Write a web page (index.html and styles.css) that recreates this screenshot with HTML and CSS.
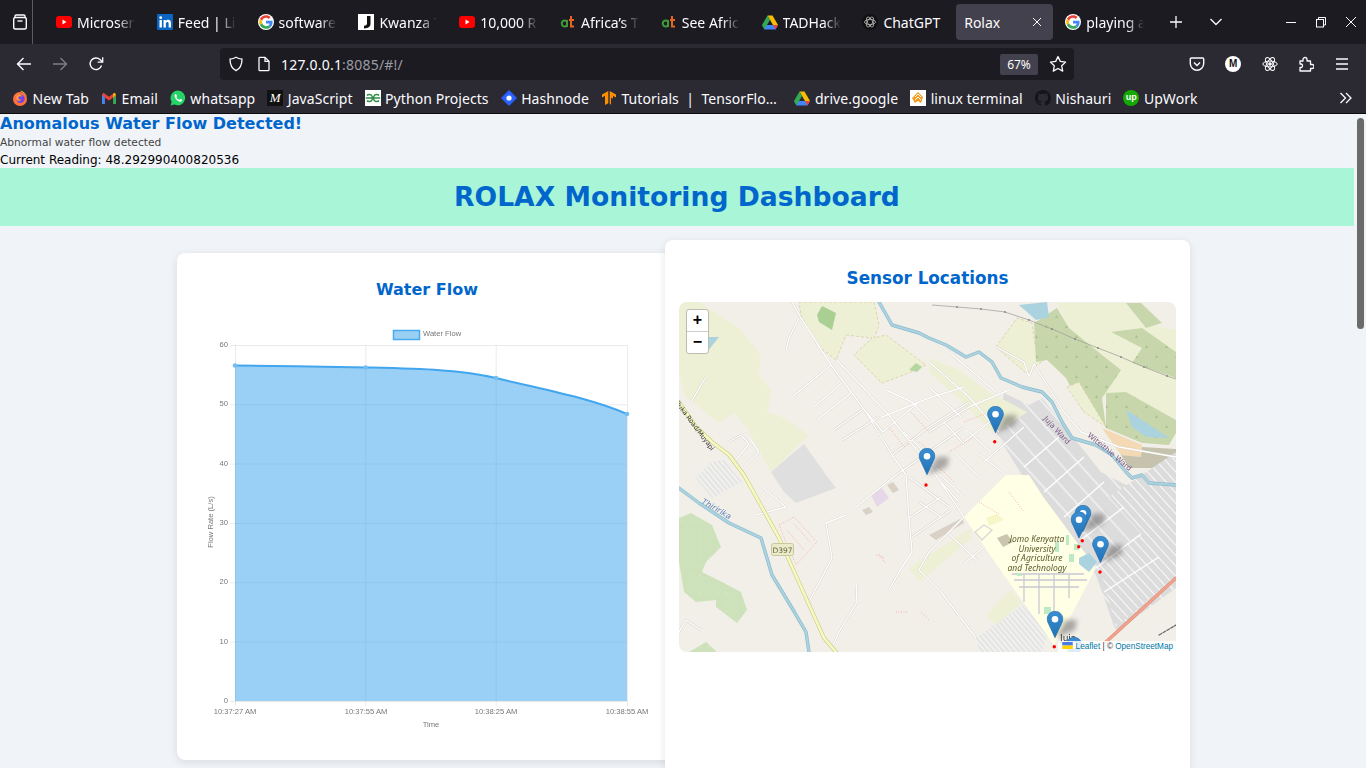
FILE: index.html
```html
<!DOCTYPE html>
<html lang="en">
<head>
    <meta charset="UTF-8">
    <title>Rolax</title>
    <link rel="stylesheet" href="styles.css">
</head>
<body>
<svg class="defs" width="0" height="0">
    <symbol id="yt" viewBox="0 0 16 16"><rect y="2" width="16" height="12" rx="3" fill="#f00"/><path d="M6.5 5.5v5l4-2.5z" fill="#fff"/></symbol>
    <symbol id="goog" viewBox="-4 -4 56 56">
        <circle cx="24" cy="24" r="28" fill="#fff"/>
        <path fill="#EA4335" d="M24 9.5c3.54 0 6.71 1.22 9.21 3.6l6.85-6.85C35.9 2.38 30.47 0 24 0 14.62 0 6.51 5.38 2.56 13.22l7.98 6.19C12.43 13.72 17.74 9.5 24 9.5z"/>
        <path fill="#4285F4" d="M46.98 24.55c0-1.57-.15-3.09-.38-4.55H24v9.02h12.94c-.58 2.96-2.26 5.48-4.78 7.18l7.73 6c4.51-4.18 7.09-10.36 7.09-17.65z"/>
        <path fill="#FBBC05" d="M10.53 28.59c-.48-1.45-.76-2.99-.76-4.59s.27-3.14.76-4.59l-7.98-6.19C.92 16.46 0 20.12 0 24c0 3.88.92 7.54 2.56 10.78l7.97-6.19z"/>
        <path fill="#34A853" d="M24 48c6.48 0 11.93-2.13 15.89-5.81l-7.73-6c-2.15 1.45-4.92 2.3-8.16 2.3-6.26 0-11.57-4.22-13.47-9.91l-7.98 6.19C6.51 42.62 14.62 48 24 48z"/>
    </symbol>
    <symbol id="at" viewBox="0 0 16 16">
        <path d="M7 7.5a3 3 0 1 0 0 4M7 6v7" fill="none" stroke="#3f9a3a" stroke-width="2"/>
        <path d="M11 2v10.500h3M9 6h5" fill="none" stroke="#e8641c" stroke-width="2"/>
    </symbol>
    <symbol id="drive" viewBox="0 0 16 15">
        <path d="M5.5 1h5L16 10.500h-5z" fill="#fbbc04"/>
        <path d="M0 10.500h16L13.500 15h-11z" fill="#4285f4"/>
        <path d="M5.5 1 8 5.500 5 10.500 2.500 15 0 10.500z" fill="#34a853"/>
        <path d="M11 10.500h5L13.500 15z" fill="#ea4335"/>
    </symbol>
    <symbol id="pin" viewBox="0 0 25 41">
        <path d="M12.5.5C5.900.5.500 5.800.500 12.300c0 2.200.7 4.400 1.800 6.200L12.500 40.500l10.200-22c1.100-1.800 1.800-4 1.800-6.200C24.500 5.800 19.100.5 12.500.5z" fill="url(#pinfill)" stroke="#2a6fa8" stroke-width="1"/>
        <circle cx="12.5" cy="12.5" r="5" fill="#fff"/>
    </symbol>
    <linearGradient id="pinfill" x1="0" y1="0" x2="0" y2="1">
        <stop offset="0" stop-color="#3a8fd2"/>
        <stop offset="1" stop-color="#2270b5"/>
    </linearGradient>
    <pattern id="blockstripes" width="14" height="14" patternUnits="userSpaceOnUse" patternTransform="rotate(48)">
        <rect width="14" height="14" fill="#dcdcdc"/>
        <path d="M0 7h14" stroke="#fff" stroke-width="1"/>
    </pattern>
    <pattern id="finestripes" width="7" height="7" patternUnits="userSpaceOnUse" patternTransform="rotate(-42)">
        <rect width="7" height="7" fill="#dcdcdc"/>
        <path d="M3.500 0v7" stroke="#fafafa" stroke-width="1"/>
    </pattern>
    <pattern id="housing" width="4" height="4" patternUnits="userSpaceOnUse" patternTransform="rotate(-40)">
        <rect width="4" height="4" fill="#e4e4e2"/>
        <path d="M2 0v4" stroke="#fff" stroke-width="1"/>
    </pattern>
    <pattern id="trees" width="9" height="9" patternUnits="userSpaceOnUse">
        <rect width="9" height="9" fill="#cde2bb"/>
        <circle cx="3" cy="3" r=".6" fill="#e6f0da"/>
    </pattern>
    <pattern id="forest" width="20" height="20" patternUnits="userSpaceOnUse">
        <rect width="20" height="20" fill="#c8d7ab"/>
        <path d="M6 6 7.500 3 9 6zM16 16l1.500-3 1.500 3z" fill="#aabf8f"/>
    </pattern>
    <filter id="soft" x="-50%" y="-50%" width="200%" height="200%"><feGaussianBlur stdDeviation="2.4"/></filter>
</svg>

<div class="browser">
    <div class="tabbar">
        <div class="tabs-btn">
            <svg width="18" height="18" viewBox="0 0 18 18" fill="none" stroke="#fbfbfe" stroke-width="1.4"><path d="M4 4.500V3.200c0-.7.5-1.200 1.200-1.200h7.600c.7 0 1.200.5 1.200 1.200v1.300"/><rect x="2.700" y="4.500" width="12.600" height="11.500" rx="1.800"/><path d="M6.500 8h5"/></svg>
        </div>
        <div class="tabs">
            <div class="tab"><svg class="fav"><use href="#yt"/></svg><span class="tab-title">Microservices</span></div>
            <div class="tab"><svg class="fav" viewBox="0 0 16 16"><rect width="16" height="16" rx="1" fill="#0a66c2"/><rect x="2.500" y="6" width="2.400" height="7.500" fill="#fff"/><circle cx="3.700" cy="3.700" r="1.400" fill="#fff"/><path d="M6.500 6h2.300v1.100c.5-.8 1.300-1.300 2.400-1.300 2 0 2.800 1.300 2.800 3.400v4.300h-2.400V9.700c0-1-.3-1.700-1.200-1.700s-1.500.7-1.500 1.800v3.700H6.500z" fill="#fff"/></svg><span class="tab-title">Feed | LinkedIn</span></div>
            <div class="tab"><svg class="fav"><use href="#goog"/></svg><span class="tab-title">software engineer</span></div>
            <div class="tab"><svg class="fav" viewBox="0 0 16 16"><rect width="16" height="16" fill="#fff"/><path d="M9 2h3.500v7.500c0 3-1.500 4.500-6.500 5v-2.700c2.300-.3 3-1 3-2.500z" fill="#111"/></svg><span class="tab-title">Kwanza Tukule</span></div>
            <div class="tab"><svg class="fav"><use href="#yt"/></svg><span class="tab-title">10,000 Reasons</span></div>
            <div class="tab"><svg class="fav"><use href="#at"/></svg><span class="tab-title">Africa’s Talking</span></div>
            <div class="tab"><svg class="fav"><use href="#at"/></svg><span class="tab-title">See Africa’s</span></div>
            <div class="tab"><svg class="fav"><use href="#drive"/></svg><span class="tab-title">TADHack 2024</span></div>
            <div class="tab"><svg class="fav" viewBox="0 0 16 16"><circle cx="8" cy="8" r="8" fill="#111"/><g fill="none" stroke="#bbb" stroke-width=".8"><ellipse cx="8" cy="8" rx="5.500" ry="2.600"/><ellipse cx="8" cy="8" rx="5.500" ry="2.600" transform="rotate(60 8 8)"/><ellipse cx="8" cy="8" rx="5.500" ry="2.600" transform="rotate(120 8 8)"/></g></svg><span class="tab-title tab-title-full">ChatGPT</span></div>
            <div class="tab tab-active"><span class="tab-title tab-title-full">Rolax</span><svg class="tab-close" width="10" height="10" viewBox="0 0 10 10" stroke="#fbfbfe" stroke-width="1"><path d="M1 1l8 8M9 1l-8 8"/></svg></div>
            <div class="tab"><svg class="fav"><use href="#goog"/></svg><span class="tab-title">playing a guitar</span></div>
        </div>
        <svg class="tab-plus" width="14" height="14" viewBox="0 0 14 14" stroke="#fbfbfe" stroke-width="1.300"><path d="M7 1v12M1 7h12"/></svg>
        <svg class="tab-list" width="14" height="10" viewBox="0 0 14 10" fill="none" stroke="#fbfbfe" stroke-width="1.300"><path d="M1.500 2l5.500 5.500L12.500 2"/></svg>
        <div class="win-controls">
            <svg width="12" height="12" viewBox="0 0 12 12" stroke="#fbfbfe" stroke-width="1"><path d="M1 6.500h10"/></svg>
            <svg width="12" height="12" viewBox="0 0 12 12" fill="none" stroke="#fbfbfe" stroke-width="1"><rect x="1.500" y="3.500" width="7" height="7.500"/><path d="M3.500 3.500v-2h7v7.500h-2"/></svg>
            <svg width="12" height="12" viewBox="0 0 12 12" stroke="#fbfbfe" stroke-width="1"><path d="M1 1l10 10M11 1L1 11"/></svg>
        </div>
    </div>

    <div class="toolbar">
        <svg class="nav-icon" width="16" height="16" viewBox="0 0 16 16" fill="none" stroke="#fbfbfe" stroke-width="1.400"><path d="M15 8H1.500M7.500 2L1.500 8l6 6"/></svg>
        <svg class="nav-icon nav-icon-off" width="16" height="16" viewBox="0 0 16 16" fill="none" stroke="#fbfbfe" stroke-width="1.400"><path d="M1 8h13.500M8.500 2l6 6-6 6"/></svg>
        <svg class="nav-icon" width="16" height="16" viewBox="0 0 16 16" fill="none" stroke="#fbfbfe" stroke-width="1.400"><path d="M13.500 9.500A5.800 5.800 0 1 1 12 3.600L14.500 6"/><path d="M14.700 1.200V6.200H9.700" stroke-width="1.300"/></svg>
        <div class="urlbar">
            <svg class="url-shield" width="16" height="16" viewBox="0 0 16 16" fill="none" stroke="#fbfbfe" stroke-width="1.300"><path d="M8 1.300c2 1.200 3.800 1.700 6 1.800 0 5-1.500 9.500-6 11.600C3.500 12.600 2 8.100 2 3.100c2.200-.1 4-.6 6-1.800z"/></svg>
            <svg class="url-page" width="14" height="16" viewBox="0 0 14 16" fill="none" stroke="#fbfbfe" stroke-width="1.300"><path d="M2 2.300c0-.6.400-1 1-1h5l4 4v8.400c0 .6-.4 1-1 1H3c-.6 0-1-.4-1-1zM8 1.300v4h4"/></svg>
            <span class="url-text">127.0.0.1<span class="url-dim">:8085/#!/</span></span>
            <span class="url-zoom">67%</span>
            <svg class="url-star" width="18" height="18" viewBox="0 0 18 18" fill="none" stroke="#fbfbfe" stroke-width="1.300" stroke-linejoin="round"><path d="M9 1.500l2.300 4.900 5.300.7-3.900 3.700 1 5.300L9 13.500l-4.700 2.600 1-5.300L1.400 7.100l5.300-.7z"/></svg>
        </div>
        <div class="tool-icons">
            <svg width="16" height="16" viewBox="0 0 16 16" fill="none" stroke="#fbfbfe" stroke-width="1.400"><path d="M2.300 2h11.400c.6 0 1 .4 1 1v4.500a6.700 6.700 0 0 1-13.400 0V3c0-.6.400-1 1-1z"/><path d="M5 6.500l3 3 3-3"/></svg>
            <span class="avatar">M</span>
            <svg width="16" height="16" viewBox="0 0 16 16" fill="none" stroke="#fbfbfe" stroke-width="1"><ellipse cx="8" cy="8" rx="7.200" ry="2.900"/><ellipse cx="8" cy="8" rx="7.200" ry="2.900" transform="rotate(60 8 8)"/><ellipse cx="8" cy="8" rx="7.200" ry="2.900" transform="rotate(120 8 8)"/><circle cx="8" cy="8" r="1.300" fill="#fbfbfe"/></svg>
            <svg width="16" height="16" viewBox="0 0 16 16" fill="none" stroke="#fbfbfe" stroke-width="1.300" stroke-linejoin="round"><path d="M2 5.500h3V4a2 2 0 0 1 4 0v1.500h3.500V9H14a2 2 0 0 1 0 4h-1.500v2.500H2V12h1.200a1.800 1.800 0 0 0 0-3.500H2z" transform="translate(0 -.5)"/></svg>
            <svg width="16" height="16" viewBox="0 0 16 16" stroke="#fbfbfe" stroke-width="1.400"><path d="M2 3h12M2 8h12M2 13h12"/></svg>
        </div>
    </div>

    <div class="bookmarks">
        <div class="bm"><svg class="fav" viewBox="0 0 16 16"><circle cx="8" cy="9" r="7" fill="#ff7139"/><path d="M8 .5c2 2 6 3 7 7 0-2-2-6-7-7z" fill="#ffbd4f"/><circle cx="8.500" cy="8.800" r="4.200" fill="#7542e5"/><path d="M5 5c2-1.500 5-.5 5 2-1-1-3-1-3.500.5C6 9 8 10 9.500 9.500 8 12 4 11 4 8c0-1 .4-2.300 1-3z" fill="#ff9640"/></svg><span>New Tab</span></div>
        <div class="bm"><svg class="fav" viewBox="0 0 16 16"><path d="M1 4.500V14h2.800V7.500L8 10.500l4.200-3V14H15V4.500l-1.500-1.800L8 6.800 2.500 2.700z" fill="#ea4335"/><path d="M1 4.500V14h2.800V7.500z" fill="#4285f4"/><path d="M15 4.500V14h-2.800V7.500z" fill="#34a853"/><path d="M12.200 7.500L15 4.500l-1.500-1.800-1.300 1z" fill="#fbbc04"/></svg><span>Email</span></div>
        <div class="bm"><svg class="fav" viewBox="0 0 16 16"><path d="M8 .5a7.400 7.400 0 0 0-6.300 11.300L.6 15.500l3.800-1A7.400 7.400 0 1 0 8 .5z" fill="#25d366"/><path d="M5.500 4c-.8.500-1.200 1.500-.8 2.800.6 2 2.400 4 4.500 4.800 1.400.5 2.600-.1 3-1 .2-.5-.1-.8-1.800-1.500-.4-.1-.6.400-1 .8-1.100-.3-2.400-1.500-3-2.700.3-.4.800-.8.600-1.200C6.300 4.200 6 3.700 5.500 4z" fill="#fff"/></svg><span>whatsapp</span></div>
        <div class="bm"><span class="fav-mdn">M</span><span>JavaScript</span></div>
        <div class="bm"><svg class="fav" viewBox="0 0 16 16"><rect width="16" height="16" fill="#fff"/><path d="M.8 8h14.400M2 5.500C3 4 6 4 7 6c.8 1.500.8 2.500 0 4-1 2-4 2-5 .5M14 5.500C13 4 10 4 9 6c-.8 1.500-.8 2.500 0 4 1 2 4 2 5 .5" fill="none" stroke="#2f8d46" stroke-width="1.500"/></svg><span>Python Projects</span></div>
        <div class="bm"><svg class="fav" viewBox="0 0 16 16"><path d="M8 .5 15.500 8 8 15.500.5 8z" fill="#2962ff" stroke="#2962ff" stroke-width="1" stroke-linejoin="round"/><circle cx="8" cy="8" r="2.600" fill="#fff"/></svg><span>Hashnode</span></div>
        <div class="bm"><svg class="fav" viewBox="0 0 16 16"><path d="M7.300 1 1 4.500v3l3-1.700V15l3.300-1.800zM8.700 1 15 4.500v3l-3-1.700v3l-2-1.200V15l-1.300-1.800z" fill="#ff8f00"/></svg><span class="bm-long">Tutorials&nbsp; |&nbsp; TensorFlo…</span></div>
        <div class="bm"><svg class="fav"><use href="#drive"/></svg><span>drive.google</span></div>
        <div class="bm"><svg class="fav" viewBox="0 0 16 16"><rect width="16" height="16" fill="#fff"/><path d="M8 2l5 5-2 6-3-2-3 2-3-5z" fill="#f39c1f"/><path d="M5 7l3-3 3 3M5 10l3-3 3 3" fill="none" stroke="#fff" stroke-width="1"/></svg><span>linux terminal</span></div>
        <div class="bm"><svg class="fav" viewBox="0 0 16 16"><path fill="#15141a" d="M8 0C3.580 0 0 3.580 0 8c0 3.540 2.290 6.530 5.470 7.590.4.070.55-.17.55-.38 0-.19-.01-.82-.01-1.490-2.010.37-2.530-.49-2.690-.94-.09-.23-.48-.94-.82-1.130-.28-.15-.68-.52-.01-.53.630-.01 1.080.58 1.230.82.720 1.210 1.870.87 2.330.66.070-.52.280-.87.510-1.070-1.780-.2-3.640-.89-3.640-3.950 0-.87.310-1.590.820-2.150-.08-.2-.36-1.020.08-2.120 0 0 .67-.21 2.200.82.640-.18 1.320-.27 2-.27s1.360.09 2 .27c1.530-1.040 2.200-.82 2.200-.82.440 1.100.160 1.920.080 2.120.51.560.82 1.270.82 2.150 0 3.070-1.870 3.750-3.650 3.950.290.250.540.730.540 1.480 0 1.070-.01 1.930-.01 2.200 0 .21.150.46.550.38A8.010 8.010 0 0 0 16 8c0-4.420-3.580-8-8-8z"/></svg><span>Nishauri</span></div>
        <div class="bm"><span class="fav-up">up</span><span>UpWork</span></div>
        <svg class="bm-more" width="14" height="12" viewBox="0 0 14 12" fill="none" stroke="#fbfbfe" stroke-width="1.300"><path d="M1.500 1l5 5-5 5M7 1l5 5-5 5"/></svg>
    </div>

    <div class="viewport">
        <div class="page">
            <div class="alert">
                <h3>Anomalous Water Flow Detected!</h3>
                <p class="alert-msg">Abnormal water flow detected</p>
                <p class="alert-reading">Current Reading: 48.292990400820536</p>
            </div>
            <header class="header">
                <h1>ROLAX Monitoring Dashboard</h1>
            </header>
            <div class="dashboard">
                <section class="card card-chart">
                    <h2>Water Flow</h2>
                    <svg class="chart" width="488" height="430" viewBox="177 310 488 430">
                        <rect x="393.5" y="330.5" width="26" height="9" fill="#9bd0f5" stroke="#4aaaee" stroke-width="1.5"/>
                        <text class="lbl" x="423" y="336">Water Flow</text>
                        <g class="grid">
                            <path d="M230 345.500h397M230 404.800h397M230 464.100h397M230 523.500h397M230 582.800h397M230 642.100h397M230 701.500h397"/>
                            <path d="M235.500 345v361M365.800 345v361M496.200 345v361M627.500 345v361"/>
                        </g>
                        <path d="M235 365.500C280 365.800 320 366.500 365.700 367.500 420 368.800 460 369.500 496 378 545 390 590 398 627 414V701H235z" fill="rgba(54,162,235,.5)"/>
                        <path d="M235 365.500C280 365.800 320 366.500 365.700 367.500 420 368.800 460 369.500 496 378 545 390 590 398 627 414" fill="none" stroke="#42a6ee" stroke-width="2"/>
                        <g fill="#74bdf2"><circle cx="235" cy="365.5" r="2.300"/><circle cx="365.7" cy="367.5" r="2.300"/><circle cx="496" cy="378" r="2.300"/><circle cx="627" cy="414" r="2.300"/></g>
                        <g class="lbl lbl-end">
                            <text x="228" y="347">60</text><text x="228" y="406">50</text><text x="228" y="466">40</text><text x="228" y="525">30</text><text x="228" y="584">20</text><text x="228" y="644">10</text><text x="228" y="703">0</text>
                        </g>
                        <g class="lbl lbl-mid">
                            <text x="235" y="714">10:37:27 AM</text><text x="366" y="714">10:37:55 AM</text><text x="496" y="714">10:38:25 AM</text><text x="627" y="714">10:38:55 AM</text>
                            <text x="431" y="727">Time</text>
                            <text transform="translate(213 522) rotate(-90)">Flow Rate (L/s)</text>
                        </g>
                    </svg>
                </section>
                <section class="card card-map">
                    <h2>Sensor Locations</h2>
                    <div class="map">
                        <svg class="map-base" width="497" height="350" viewBox="0 0 497 350">
                            <defs>
                                <g id="streets">
                                    <path d="M113 0 122 16 152 63 187 110 213 153 227 173 230 216 233 250 220 270 210 288"/>
                                    <path d="M152 63 112 96M163 81 135 105M172 91 138 118M183 108 155 128M200 115 163 138M120 16 110 36 107 48M27 75 12 100"/>
                                    <path d="M158 58 207 110 250 163 285 215M207 88 233 100 250 118M203 115 250 96 285 85M187 110 204 130 240 100M213 153 250 125 290 100"/>
                                    <path d="M83 185 107 205 77 213M147 221 167 213M147 221 153 256 130 300M177 280 178 300 160 330 153 346M177 205 217 173 250 150 285 125M0 330 7 318 22 328"/>
                                    <path d="M50 140 62 133 70 142 55 160M70 135 80 150 65 165"/>
                                    <path d="M250 60 290 95 320 130M270 50 317 90M250 85 282 115M317 45 345 60 350 75 355 62 385 110 402 130 440 145 497 155"/>
                                    <path d="M250 130 290 105 330 88M285 140 317 115M305 160 345 125"/>
                                    <path d="M285 215 250 250 240 268 262 290 297 336M327 173 297 150M260 172 285 195M270 232 300 260M285 262 305 245"/>
                                    <path d="M250 190 270 205M262 180 280 200M240 200 262 215M230 175 250 190M230 216 262 195M233 235 272 208M240 150 262 170M275 150 300 175M290 130 312 150M225 130 245 150M265 120 285 142"/>
                                </g>
                            </defs>
                            <rect width="497" height="350" fill="#f2efe9"/>
                            <!-- land use -->
                            <path d="M0 0H20L60 26 82 53 80 73 93 90 88 110 103 115 130 133 92 170 68 126 55 110 40 121 17 103 7 96 0 73z" fill="#eef0d5"/>
                            <path d="M92 170 125 142 147 173 157 186 117 201 105 190z" fill="#dfdfdf"/>
                            <path d="M120 0H195L200 23 195 36 207 33 247 63 230 71 203 81 175 53 193 36 167 33 163 43 157 58 138 43 122 13z" fill="#eef0d5" stroke="#d9c693" stroke-width=".7" stroke-dasharray="3 2"/>
                            <path d="M138 13 143 4 157 11 153 28 140 20z" fill="#a9cf93"/>
                            <path d="M230 68 237 61 243 65 238 70z" fill="#b5d6a0"/>
                            <path d="M6 18 10 34 28 50 40 35 10 35z" fill="#aad3df"/>
                            <path d="M317 45 338 16 353 21 357 50 368 56 347 71z" fill="#eef0d5" stroke="#d9c693" stroke-width=".7" stroke-dasharray="3 2"/>
                            <path d="M378 1H447L462 21 497 28V116L463 103 437 90 423 95 417 76 385 16z" fill="#eef0d5"/>
                            <path d="M355 21 378 6 390 26 423 53 442 68 430 86 423 96 427 125 403 108 387 76 368 58 357 60z" fill="url(#forest)"/>
                            <path d="M432 30 463 26 497 50V76L453 61 463 46z" fill="url(#forest)"/>
                            <path d="M427 91 447 90 497 118V131L490 143 463 141 427 126z" fill="url(#forest)"/>
                            <path d="M447 1H462L483 21 467 26z" fill="#c8d7ab"/>
                            <path d="M388 85 400 80 427 125 405 110z" fill="#eef0d5" stroke="#d9c693" stroke-width=".6" stroke-dasharray="3 2"/>
                            <path d="M340 3 368 0 370 15 357 18z" fill="#aad3df"/>
                            <path d="M447 108 463 118 490 136 467 135 453 125z" fill="#aad3df"/>
                            <path d="M423 126 463 143 462 155 442 153z" fill="#f3d9b4"/>
                            <path d="M442 153 462 155 463 145 497 147V173L477 166 450 166z" fill="#c5c3ae"/>
                            <path d="M325 91 350 103 363 96 422 170 447 183 497 228V286L437 330 417 273 360 200 343 173 317 131z" fill="url(#blockstripes)"/>
                            <path d="M430 195 497 150V228L470 240z" fill="url(#finestripes)"/>
                            <path d="M420 262 497 205V275L437 325z" fill="url(#finestripes)"/>
                            <path d="M250 56 280 68 310 90 348 110 330 123 313 130 283 100 250 70z" fill="#eef0d5"/>
                            <path d="M0 216 12 211 33 223 42 245 27 260 23 270 43 280 62 290 68 308 58 321 37 305 37 298 17 300 5 290 0 260zM10 350 27 340 38 350z" fill="url(#trees)"/>
                            <path d="M17 176 33 196 63 180 57 173 45 158 32 160z" fill="url(#housing)"/>
                            <path d="M192 193 203 186 210 196 198 205z" fill="#e6d8e8"/>
                            <path d="M208 183 214 180 220 188 214 191zM183 208 190 205 194 210 187 213zM250 233 283 216 285 221 257 238z" fill="#d9d0c6"/>
                            <path d="M230 266 292 226 293 236 240 280z" fill="#eef0d5"/>
                            <path d="M297 336 343 303 370 330 363 350H300z" fill="url(#housing)"/>
                            <!-- campus -->
                            <path d="M285 215 327 173H350L365 196 417 266 387 323 375 343 320 266z" fill="#ffffe5"/>
                            <path d="M307 313 332 288 343 301 317 323z" fill="#eef0d5"/>
                            <path d="M333 272H405M335 278H408M340 285H400M345 272V300M360 272V312M375 272V310M390 272V296" fill="none" stroke="#c9c9d3" stroke-width="1.300"/>
                            <path d="M400 256 410 251 418 260 410 270 400 262z" fill="#aad3df"/>
                            <path d="M376 240H380V250H376zM387 233H390V243H387zM395 242H400V248H395zM390 252H395V260H390zM338 271H343V274H338zM365 305H372V312H365z" fill="#bde9c6"/>
                            <path d="M318 236 328 232 334 240 324 245z" fill="#c9c5ae"/>
                            <path d="M296 230 305 223 313 228 303 238z" fill="none" stroke="#d8d8d8" stroke-width="1.300"/>
                            <path d="M310 224 325 218 318 212 307 216z" fill="#f6f6c8"/>
                            <!-- water -->
                            <g fill="none" stroke-linecap="round" stroke-linejoin="round">
                                <path d="M200 0 213 23 240 31 250 36 267 43 287 55 300 50 313 60 322 76 343 85 363 90 373 100 383 120 393 136 417 143 433 153 447 170 453 176 463 173 470 181 497 183" stroke="#8db9cb" stroke-width="3.400"/>
                                <path d="M200 0 213 23 240 31 250 36 267 43 287 55 300 50 313 60 322 76 343 85 363 90 373 100 383 120 393 136 417 143 433 153 447 170 453 176 463 173 470 181 497 183" stroke="#aad3df" stroke-width="2.200"/>
                                <path d="M0 186 20 201 50 221 82 236 93 273 113 306 127 330 130 350" stroke="#8db9cb" stroke-width="3.400"/>
                                <path d="M0 186 20 201 50 221 82 236 93 273 113 306 127 330 130 350" stroke="#aad3df" stroke-width="2.200"/>
                            </g>
                            <!-- power line -->
                            <path d="M253 3 278 5 302 7 326 10 350 18 373 27 396 37 419 46 442 55 465 65 488 74 497 77" fill="none" stroke="#999" stroke-width=".7"/>
                            <g fill="#8a8a8a"><circle cx="278" cy="5" r="1"/><circle cx="302" cy="7" r="1"/><circle cx="326" cy="10" r="1"/><circle cx="350" cy="18" r="1"/><circle cx="373" cy="27" r="1"/><circle cx="396" cy="37" r="1"/><circle cx="419" cy="46" r="1"/><circle cx="442" cy="55" r="1"/><circle cx="465" cy="65" r="1"/><circle cx="488" cy="74" r="1"/></g>
                            <!-- white roads, casing then fill -->
                            <use href="#streets" class="roads-case"/>
                            <use href="#streets" class="roads"/>
                            <path class="roads" d="M345 165 380 135M365 190 405 155M385 215 425 180M402 238 445 205M417 266 462 232M425 290 480 255"/>
                            <g fill="none" stroke="#f3a696" stroke-width=".8" stroke-dasharray="1 1.500">
                                <path d="M100 223 115 215 138 240 117 263 100 223M108 228 125 248M115 222 131 240"/>
                                <path d="M200 252 207 262M197 253 206 256M217 310H228M242 310 250 318"/>
                                <path d="M210 125 225 145 235 135M232 110 250 130M240 140 252 150"/>
                                <path d="M285 120 305 112M270 150 295 135M260 165 275 180M300 200 320 212M330 190 345 210"/>
                            </g>
                            <!-- main roads -->
                            <g fill="none" stroke-linecap="round" stroke-linejoin="round">
                                <path d="M0 100 17 125 33 140 50 153 65 173 100 236 145 336 157 350" stroke="#c8c98c" stroke-width="3.800"/>
                                <path d="M0 100 17 125 33 140 50 153 65 173 100 236 145 336 157 350" stroke="#f7fabf" stroke-width="2.600"/>
                                <path d="M427 340 497 276" stroke="#e58e78" stroke-width="3.400"/>
                                <path d="M427 340 497 276" stroke="#f0a590" stroke-width="1.800"/>
                                <path d="M480 333 497 323" stroke="#666" stroke-width="1.200" stroke-dasharray="3 1.500"/>
                            </g>
                            <!-- labels -->
                            <text class="road-label" transform="translate(-4 101) rotate(53)">Ruka Road/Muyapi</text>
                            <text class="river-label" transform="translate(22 201) rotate(30)">Thiririka</text>
                            <text class="ward-label" transform="translate(364 117) rotate(47)">Juja Ward</text>
                            <text class="ward-label" transform="translate(408 134) rotate(40)">Witeithie Ward</text>
                            <g class="campus-label">
                                <text x="358" y="240">Jomo Kenyatta</text>
                                <text x="358" y="249.5">University</text>
                                <text x="358" y="259">of Agriculture</text>
                                <text x="358" y="268.5">and Technology</text>
                            </g>
                            <text class="town-label" x="381" y="338.5">Juja</text>
                            <rect class="shield" x="92.5" y="241.5" width="22" height="12" rx="2"/>
                            <text class="shield-text" x="103.5" y="250.5">D397</text>
                            <!-- sensors -->
                            <g fill="#333" opacity=".38" filter="url(#soft)">
                                <path d="M316 131 326 113 338 113 336 123z"/><path d="M248 173 258 155 270 155 268 165z"/><path d="M404 230 414 212 426 212 424 222z"/><path d="M422 261 432 243 444 243 442 253z"/><path d="M376 336 386 318 398 318 396 328z"/>
                            </g>
                            <g fill="#f00">
                                <circle cx="315.7" cy="139.7" r="1.700"/><circle cx="247" cy="183" r="1.700"/><circle cx="403.3" cy="238.7" r="1.700"/><circle cx="399.7" cy="244.7" r="1.700"/><circle cx="421" cy="270" r="1.700"/><circle cx="375.3" cy="344.7" r="1.700"/>
                            </g>
                            <use href="#pin" x="308" y="104" width="17" height="27"/>
                            <use href="#pin" x="239.5" y="146" width="17" height="27"/>
                            <use href="#pin" x="395.5" y="203" width="17" height="27"/>
                            <use href="#pin" x="391.5" y="209.5" width="17" height="27"/>
                            <use href="#pin" x="413" y="234" width="17" height="27"/>
                            <use href="#pin" x="367.5" y="309" width="17" height="27"/>
                            <use href="#pin" x="386.5" y="335" width="17" height="27"/>
                        </svg>
                        <div class="zoom-ctl">
                            <span class="zoom-btn zoom-in">+</span>
                            <span class="zoom-btn">−</span>
                        </div>
                        <div class="attribution">
                            <svg width="11" height="7" viewBox="0 0 12 8"><rect width="12" height="4" fill="#4c7be1"/><rect y="4" width="12" height="4" fill="#ffd500"/></svg>
                            <a>Leaflet</a> | © <a>OpenStreetMap</a>
                        </div>
                    </div>
                </section>
            </div>
        </div>
        <div class="scrollbar"><div class="scroll-thumb"></div></div>
    </div>
</div>
</body>
</html>
```

FILE: styles.css
```css
* {
    box-sizing: border-box;
    margin: 0;
    padding: 0;
}

html, body {
    height: 100%;
    overflow: hidden;
}

body {
    font-family: 'DejaVu Sans', sans-serif;
    background: #f0f4f8;
}

.defs {
    display: block;
    height: 0;
}

.browser {
    display: flex;
    flex-direction: column;
    height: 768px;
    overflow: hidden;
}

/* browser chrome */
.tabbar {
    height: 44px;
    flex: none;
    background: #1c1b22;
    display: flex;
    align-items: center;
    color: #fbfbfe;
    font-family: 'Noto Sans', sans-serif;
    font-size: 14px;
}

.tabs-btn {
    width: 33px;
    height: 44px;
    padding: 13px 0 0 11px;
    border-right: 1px solid #5a5a60;
    flex: none;
}

.tabs {
    display: flex;
    height: 44px;
    margin-left: 14px;
    flex: none;
}

.tab {
    width: 100.8px;
    height: 44px;
    padding-left: 9px;
    display: flex;
    align-items: center;
    position: relative;
    flex: none;
}

.fav {
    width: 16px;
    height: 16px;
    flex: none;
}

.tab-title {
    width: 58px;
    margin-left: 5px;
    white-space: nowrap;
    overflow: hidden;
    -webkit-mask-image: linear-gradient(to right, #000 70%, transparent);
    mask-image: linear-gradient(to right, #000 70%, transparent);
}

.tab-title-full {
    width: auto;
    overflow: visible;
    -webkit-mask-image: none;
    mask-image: none;
}

.tab-active {
    width: 97px;
    margin: 4px 3px 0 2px;
    height: 36px;
    padding-left: 3px;
    background: #42414d;
    border-radius: 4px;
}

.tab-close {
    position: absolute;
    right: 11px;
    top: 13px;
}

.tab-plus {
    margin-left: 12px;
    flex: none;
}

.tab-list {
    margin-left: 26px;
    flex: none;
}

.win-controls {
    margin-left: auto;
    width: 90px;
    padding: 0 9px;
    display: flex;
    justify-content: space-between;
    flex: none;
}

.toolbar {
    height: 40px;
    flex: none;
    background: #2b2a33;
    display: flex;
    align-items: center;
    padding-left: 16px;
}

.nav-icon {
    margin-right: 20px;
    flex: none;
}

.nav-icon-off {
    opacity: .4;
}

.urlbar {
    width: 854px;
    height: 32px;
    margin-left: 76px;
    background: #1c1b22;
    border-radius: 4px;
    display: flex;
    align-items: center;
    padding-left: 8px;
    color: #fbfbfe;
    font-family: 'Noto Sans', sans-serif;
    font-size: 14px;
    flex: none;
}

.toolbar .nav-icon:nth-child(3) {
    margin-right: 40px;
}

.url-page {
    margin-left: 13px;
}

.url-text {
    margin-left: 10px;
    letter-spacing: .2px;
}

.url-dim {
    color: #9b9ba3;
}

.url-zoom {
    margin-left: auto;
    width: 38px;
    height: 21px;
    line-height: 21px;
    text-align: center;
    font-size: 12px;
    background: #42414d;
    border-radius: 2px;
}

.url-star {
    margin: 0 7px 0 11px;
}

.tool-icons {
    flex: 1;
    display: flex;
    align-items: center;
    justify-content: space-between;
    padding: 0 16px 0 115px;
}

.avatar {
    width: 16px;
    height: 16px;
    border-radius: 50%;
    background: #fff;
    color: #15141a;
    font-family: 'Liberation Sans', sans-serif;
    font-size: 10px;
    font-weight: bold;
    line-height: 16px;
    text-align: center;
}

.bookmarks {
    height: 30px;
    flex: none;
    background: #2b2a33;
    border-bottom: 1px solid #0c0c0d;
    display: flex;
    align-items: center;
    padding: 0 0 1px 12px;
    color: #fbfbfe;
    font-family: 'Noto Sans', sans-serif;
    font-size: 14px;
    letter-spacing: .07px;
}

.bm {
    display: flex;
    align-items: center;
    gap: 4.5px;
    margin-right: 12px;
    white-space: nowrap;
    flex: none;
}

.bm-long {
    width: 156px;
    margin-right: 5px;
}

.fav-mdn {
    width: 16px;
    height: 16px;
    background: #111;
    color: #fff;
    font-family: 'Liberation Serif', serif;
    font-style: italic;
    font-size: 13px;
    line-height: 16px;
    text-align: center;
}

.fav-up {
    width: 16px;
    height: 16px;
    border-radius: 50%;
    background: #14a800;
    color: #fff;
    font-family: 'Liberation Sans', sans-serif;
    font-size: 9px;
    font-weight: bold;
    line-height: 15px;
    text-align: center;
}

.bm-more {
    margin-left: auto;
    margin-right: 13px;
}

/* page */
.viewport {
    flex: 1;
    display: flex;
    min-height: 0;
}

.page {
    flex: 1;
    min-width: 0;
    overflow: hidden;
}

.scrollbar {
    width: 12px;
    flex: none;
    padding: 4px 2px 0 3px;
    background: #f0f4f8;
}

.scroll-thumb {
    width: 7px;
    height: 211px;
    background: #6b6b6b;
    border-radius: 4px;
}

.alert {
    height: 54px;
}

.alert h3 {
    font-size: 16px;
    line-height: 19px;
    color: #0066cc;
}

.alert-msg {
    font-size: 10.67px;
    line-height: 13px;
    margin-top: 3px;
    color: #444;
}

.alert-reading {
    font-size: 12px;
    line-height: 15px;
    margin-top: 4px;
    color: #000;
}

.header {
    height: 58px;
    background: #a8f5d8;
    text-align: center;
}

.header h1 {
    font-size: 26.6px;
    line-height: 57px;
    color: #0066cc;
}

.dashboard {
    display: flex;
    align-items: center;
    margin: 14px 0 0 177px;
}

.card {
    background: #fff;
    border-radius: 8px;
    box-shadow: 0 2px 8px rgba(0, 0, 0, 0.1);
    flex: none;
}

.card h2 {
    font-size: 16px;
    line-height: 19px;
    text-align: center;
    color: #0066cc;
}

.card-chart {
    width: 500px;
    height: 507px;
    padding-top: 27px;
}

.chart {
    display: block;
    margin-top: 11px;
    filter: blur(.35px);
}

.grid path {
    fill: none;
    stroke: rgba(0, 0, 0, .08);
    stroke-width: 1;
}

.lbl {
    font-family: 'Liberation Sans', sans-serif;
    font-size: 7.6px;
    fill: #777;
}

.lbl-end {
    text-anchor: end;
}

.lbl-mid {
    text-anchor: middle;
}

.card-map {
    width: 525px;
    height: 533px;
    margin-left: -12px;
    padding: 28px 14px 0;
    position: relative;
}

.card-map h2 {
    font-size: 16.8px;
    line-height: 20px;
}

.map {
    margin-top: 14px;
    width: 497px;
    height: 350px;
    border-radius: 8px;
    overflow: hidden;
    position: relative;
}

.map-base {
    display: block;
    filter: blur(.25px);
}

.roads-case {
    fill: none;
    stroke: #d4d0c8;
    stroke-width: 2.2;
    stroke-linejoin: round;
}

.roads {
    fill: none;
    stroke: #fff;
    stroke-width: 1.4;
    stroke-linejoin: round;
}

.road-label {
    font-family: 'DejaVu Sans', sans-serif;
    font-size: 6.5px;
    fill: #333;
}

.river-label {
    font-family: 'DejaVu Sans', sans-serif;
    font-style: italic;
    font-size: 8px;
    fill: #5a7fb8;
}

.ward-label {
    font-family: 'DejaVu Sans', sans-serif;
    font-size: 7.5px;
    fill: #7d5a88;
}

.campus-label {
    font-family: 'Noto Sans', sans-serif;
    font-style: italic;
    font-size: 8.5px;
    fill: #5c5a2a;
    text-anchor: middle;
}

.town-label {
    font-family: 'DejaVu Sans', sans-serif;
    font-size: 9px;
    fill: #333;
}

.shield {
    fill: #ecebc9;
    stroke: #c8c89e;
    stroke-width: 1;
}

.shield-text {
    font-family: 'DejaVu Sans', sans-serif;
    font-size: 7.5px;
    fill: #666640;
    text-anchor: middle;
}

.zoom-ctl {
    position: absolute;
    left: 7px;
    top: 7px;
    width: 23px;
    border: 1px solid #bdbcae;
    border-radius: 3px;
    background: #fff;
    overflow: hidden;
}

.zoom-btn {
    display: block;
    height: 21px;
    line-height: 20px;
    text-align: center;
    font-family: 'Liberation Sans', sans-serif;
    font-size: 16px;
    font-weight: bold;
    color: #000;
}

.zoom-in {
    border-bottom: 1px solid #ccc;
    height: 22px;
}

.attribution {
    position: absolute;
    right: 0;
    bottom: 0;
    height: 11px;
    padding: 0 3px 0 4px;
    background: rgba(255, 255, 255, .85);
    font-family: 'Liberation Sans', sans-serif;
    font-size: 8.2px;
    line-height: 11px;
    color: #333;
    white-space: nowrap;
}

.attribution a {
    color: #0078a8;
}
```
